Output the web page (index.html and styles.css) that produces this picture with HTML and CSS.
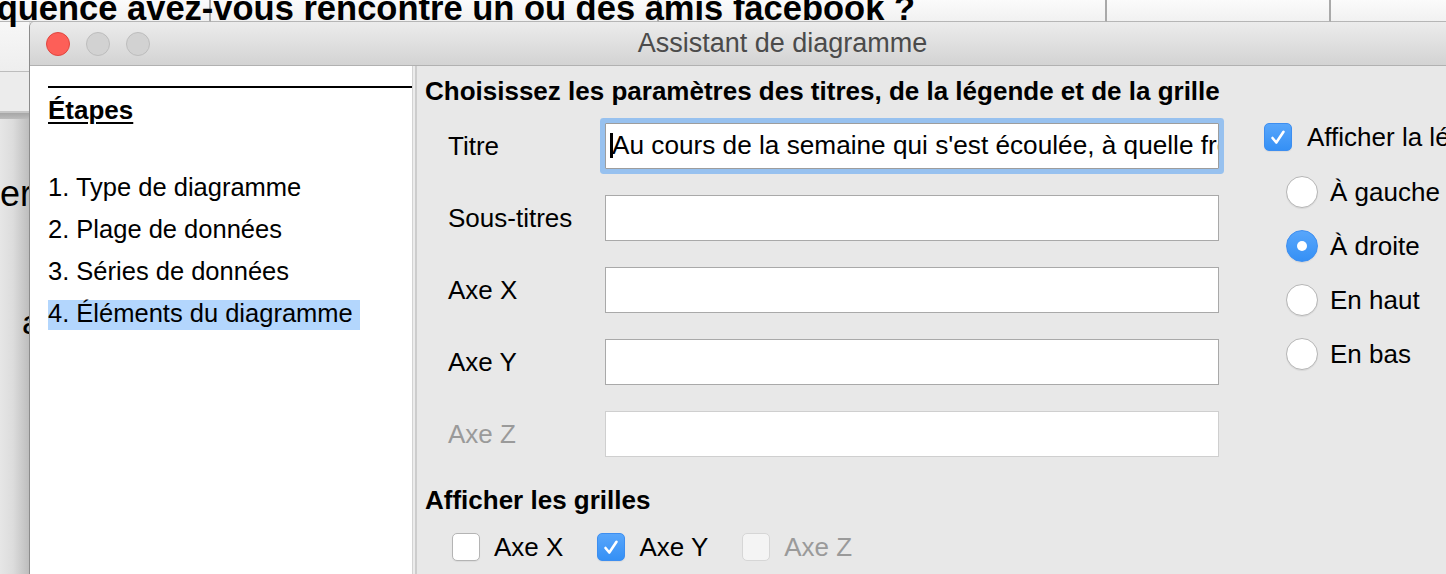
FILE: index.html
```html
<!DOCTYPE html>
<html lang="fr">
<head>
<meta charset="utf-8">
<title>Assistant de diagramme</title>
<link rel="stylesheet" href="styles.css">
</head>
<body>
<div class="desktop">
  <div class="sheet-top">
    <div class="cell c1"></div>
    <div class="cell c2"></div>
    <div class="cell c3"></div>
    <div class="cell c4"></div>
    <div class="cell c5 last"></div>
    <div class="sheet-title"><span>à quelle fréquence avez-vous rencontré un ou des amis facebook ?</span></div>
  </div>
  <div class="sheet-left">
    <div class="lr1"></div>
    <div class="lr2"></div>
    <div class="lr3"></div>
    <div class="sheet-area">
      <span class="frag frag-er">er</span>
      <span class="frag frag-a">a</span>
    </div>
  </div>
  <div class="window">
    <div class="titlebar">
      <div class="lights">
        <span class="light close"></span>
        <span class="light"></span>
        <span class="light"></span>
      </div>
      <div class="wtitle">Assistant de diagramme</div>
      <div></div>
    </div>
    <div class="wbody">
      <aside class="steps">
        <div class="rule"></div>
        <div class="steps-title">Étapes</div>
        <ol class="step-list">
          <li class="step"><span>1. Type de diagramme</span></li>
          <li class="step"><span>2. Plage de données</span></li>
          <li class="step"><span>3. Séries de données</span></li>
          <li class="step current"><span>4. Éléments du diagramme</span></li>
        </ol>
      </aside>
      <div class="divider"></div>
      <main class="content">
        <h2 class="heading">Choisissez les paramètres des titres, de la légende et de la grille</h2>
        <div class="form-area">
          <div class="fields">
            <label class="flabel">Titre</label>
            <div class="field focus"><span class="caret"></span>Au cours de la semaine qui s'est écoulée, à quelle fréquence avez-vous rencontré un ou des amis facebook ?</div>
            <label class="flabel">Sous-titres</label>
            <div class="field"></div>
            <label class="flabel">Axe X</label>
            <div class="field"></div>
            <label class="flabel">Axe Y</label>
            <div class="field"></div>
            <label class="flabel disabled">Axe Z</label>
            <div class="field disabled"></div>
          </div>
          <div class="legend">
            <div class="opt">
              <span class="cb on"><svg viewBox="0 0 28 28" width="28" height="28"><path d="M8.5 15 L12.3 19.5 L19.5 8.8" fill="none" stroke="#fff" stroke-width="2.6" stroke-linecap="round" stroke-linejoin="round"/></svg></span>
              <span class="opt-text">Afficher la légende</span>
            </div>
            <div class="radios">
              <div class="ropt"><span class="radio"></span><span>À gauche</span></div>
              <div class="ropt"><span class="radio on"></span><span>À droite</span></div>
              <div class="ropt"><span class="radio"></span><span>En haut</span></div>
              <div class="ropt"><span class="radio"></span><span>En bas</span></div>
            </div>
          </div>
        </div>
        <h2 class="heading grids">Afficher les grilles</h2>
        <div class="grid-opts">
          <div class="gopt"><span class="cb"></span><span>Axe X</span></div>
          <div class="gopt"><span class="cb on"><svg viewBox="0 0 28 28" width="28" height="28"><path d="M8.5 15 L12.3 19.5 L19.5 8.8" fill="none" stroke="#fff" stroke-width="2.6" stroke-linecap="round" stroke-linejoin="round"/></svg></span><span>Axe Y</span></div>
          <div class="gopt disabled"><span class="cb off"></span><span>Axe Z</span></div>
        </div>
      </main>
    </div>
  </div>
</div>
</body>
</html>
```

FILE: styles.css
```css
* { box-sizing: border-box; }
html, body { margin: 0; padding: 0; }
body {
  width: 1446px;
  height: 574px;
  overflow: hidden;
  background: #e2e2e2;
  font-family: "Liberation Sans", Arial, sans-serif;
  color: #000;
}
.desktop {
  display: grid;
  grid-template-columns: 29px 1fr;
  grid-template-rows: 22px 1fr;
  height: 574px;
}

/* spreadsheet behind */
.sheet-top {
  grid-column: 1 / -1;
  grid-row: 1;
  display: grid;
  grid-template-columns: 211px 448px 448px 224px 1fr;
  grid-template-rows: 22px;
}
.cell {
  grid-row: 1;
  background: linear-gradient(#fbfbfb, #f1f1f1);
  border-right: 2px solid #a9a9a9;
  border-bottom: 1px solid #b6b6b6;
}
.c1 { grid-column: 1; }
.c2 { grid-column: 2; }
.c3 { grid-column: 3; }
.c4 { grid-column: 4; }
.c5 { grid-column: 5; }
.cell.last { border-right: none; }
.sheet-title {
  grid-column: 1 / -1;
  grid-row: 1;
  width: 915px;
  display: flex;
  justify-content: flex-end;
  position: relative;
  z-index: 1;
}
.sheet-title span {
  white-space: nowrap;
  font-weight: bold;
  font-size: 34.5px;
  line-height: 22px;
  margin-top: -3px;
  flex: none;
}
.sheet-left {
  grid-column: 1;
  grid-row: 2;
  display: flex;
  flex-direction: column;
  overflow: hidden;
}
.lr1 { height: 50px; background: linear-gradient(#f7f7f7, #eeeeee); border-bottom: 1px solid #bdbdbd; }
.lr2 { height: 41px; background: #ececec; border-bottom: 2px solid #c6c6c6; }
.lr3 { height: 6px; background: linear-gradient(#a6a6a6, #bcbcbc); }
.sheet-area {
  flex: 1;
  display: flex;
  flex-direction: column;
  background: linear-gradient(to right, #e6e6e6 0%, #dcdcdc 45%, #bdbdbd 100%);
}
.frag { display: block; white-space: nowrap; }
.frag-er { font-size: 36px; line-height: 36px; margin-top: 57px; }
.frag-a { font-size: 34px; line-height: 34px; margin-top: 93px; margin-left: 22px; }

/* window */
.window {
  grid-column: 2;
  grid-row: 2;
  width: 1506px;
  position: relative;
  z-index: 2;
  border-left: 1px solid #8c8c8c;
  border-top-left-radius: 5px;
  background: #e8e8e8;
  display: flex;
  flex-direction: column;
}
.titlebar {
  height: 44px;
  flex: none;
  border-bottom: 1px solid #b1b1b1;
  border-top-left-radius: 5px;
  background: linear-gradient(#ececec, #d3d3d3);
  display: grid;
  grid-template-columns: 1fr auto 1fr;
  align-items: center;
}
.lights { display: flex; gap: 16px; padding-left: 16px; }
.light {
  width: 24px;
  height: 24px;
  border-radius: 50%;
  background: #d2d2d2;
  border: 1px solid #bdbdbd;
}
.light.close { background: #fd5f58; border-color: #e0463f; }
.wtitle {
  font-family: "Liberation Sans", Arial, sans-serif;
  font-size: 27px;
  color: #4b4b4b;
  white-space: nowrap;
}
.wbody { flex: 1; display: flex; }

/* steps */
.steps {
  width: 382px;
  flex: none;
  background: #fff;
  padding: 20px 0 0 18px;
}
.rule { height: 2px; background: #000; }
.steps-title {
  margin-top: 7px;
  font-weight: bold;
  font-size: 26px;
  line-height: 30px;
  text-decoration: underline;
  text-decoration-thickness: 2px;
  text-underline-offset: 3px;
}
.step-list { list-style: none; margin: 49px 0 0; padding: 0; }
.step { display: flex; margin-bottom: 12px; }
.step span {
  height: 30px;
  font-size: 25.5px;
  line-height: 26px;
  padding: 0 7px 4px 0;
  white-space: nowrap;
}
.step.current span { background: #b3d6fd; }

.divider {
  width: 5px;
  flex: none;
  background: linear-gradient(to right, #d3d3d3 0, #d3d3d3 1.5px, #ececec 1.5px, #ececec 3px, #cdcdcd 3px, #cdcdcd 5px);
}

/* content */
.content { flex: 1; padding: 10px 0 0 8px; }
.heading {
  margin: 0;
  font-weight: bold;
  font-size: 26px;
  line-height: 30px;
  white-space: nowrap;
}
.form-area { display: flex; margin-top: 17px; }
.fields {
  display: grid;
  grid-template-columns: 156px 614px;
  grid-auto-rows: 46px;
  row-gap: 26px;
  padding-left: 24px;
  align-items: center;
}
.flabel { font-size: 26px; line-height: 30px; margin-left: -1px; }
.flabel.disabled { color: #9a9a9a; }
.field {
  height: 46px;
  background: #fff;
  border: 1px solid #a9a9a9;
  font-size: 26.2px;
  line-height: 43px;
  padding-left: 4px;
  white-space: nowrap;
  overflow: hidden;
}
.field.focus {
  border-color: #9d9d9d;
  border-radius: 1px;
  box-shadow: 0 0 0 5px #97c1ef;
}
.field.disabled { border-color: #cfcfcf; }
.caret {
  display: inline-block;
  width: 3px;
  height: 25px;
  background: #000;
  vertical-align: -4px;
  margin-right: -1px;
}
.legend { margin-left: 45px; }
.opt { display: flex; align-items: center; gap: 15px; height: 28px; }
.opt-text, .ropt span:last-child, .gopt span:last-child {
  font-size: 26px;
  line-height: 30px;
  white-space: nowrap;
}
.cb {
  width: 28px;
  height: 28px;
  flex: none;
  border-radius: 5px;
  background: #fff;
  border: 1px solid #b4b4b4;
  box-shadow: 0 1px 1px rgba(0,0,0,0.06);
  display: block;
}
.cb svg { display: block; margin: -1px; }
.cb.on { background: linear-gradient(#58a6fb, #3590f5); border-color: #3d8ef0; }
.cb.off { background: #f4f4f4; border-color: #d6d6d6; box-shadow: none; }
.radios {
  display: flex;
  flex-direction: column;
  gap: 22px;
  margin-top: 25px;
  padding-left: 22px;
}
.ropt { display: flex; align-items: center; gap: 12px; height: 32px; }
.radio {
  width: 32px;
  height: 32px;
  flex: none;
  border-radius: 50%;
  background: #fff;
  border: 1px solid #b6b6b6;
  box-shadow: 0 1px 1px rgba(0,0,0,0.07);
  display: flex;
  align-items: center;
  justify-content: center;
}
.radio.on { background: linear-gradient(#58a6fb, #3590f5); border-color: #3d8ef0; }
.radio.on::after {
  content: "";
  width: 10px;
  height: 10px;
  border-radius: 50%;
  background: #fff;
}
.heading.grids { margin-top: 28px; }
.grid-opts {
  display: flex;
  gap: 34px;
  margin-top: 18px;
  padding-left: 27px;
}
.gopt { display: flex; align-items: center; gap: 14px; height: 28px; }
.gopt.disabled span:last-child { color: #9a9a9a; }
```
